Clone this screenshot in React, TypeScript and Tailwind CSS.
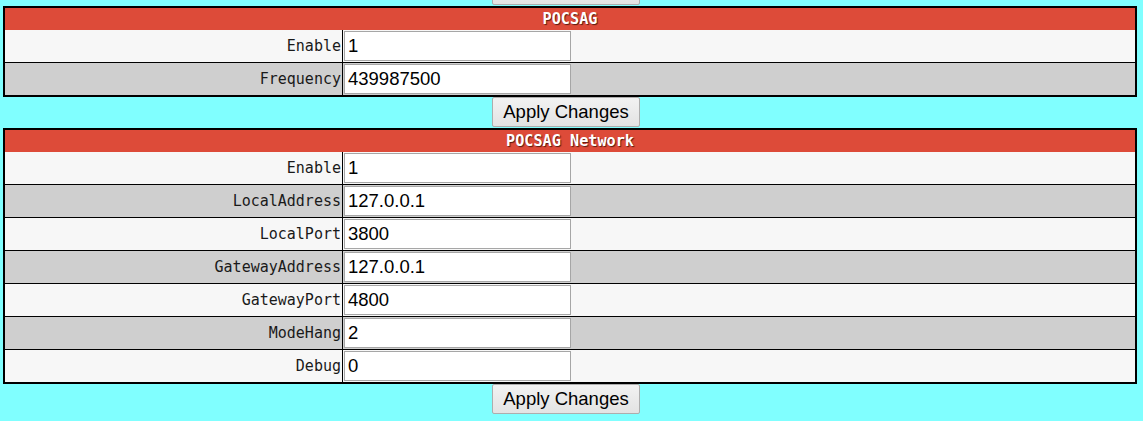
import React from "react";

const mono = { fontFamily: '"DejaVu Sans Mono", "Liberation Mono", monospace' };
const arial = { fontFamily: '"Liberation Sans", Arial, sans-serif' };

function ApplyButton({ className = "" }: { className?: string }) {
  return (
    <div className={`w-[1132px] h-[31px] flex justify-center items-start ${className}`}>
      <button
        style={arial}
        className="h-[30px] w-[148px] border border-[#adadad] bg-gradient-to-b from-[#f2f2f2] to-[#e3e3e3] text-[18.5px] leading-none text-black rounded-[2px]"
      >
        Apply Changes
      </button>
    </div>
  );
}

function Row({ label, value, dark, last }: { label: string; value: string; dark: boolean; last: boolean }) {
  return (
    <div
      className={`flex ${last ? "h-[32px]" : "h-[33px] border-b border-black"} ${dark ? "bg-[#cfcfcf]" : "bg-[#f7f7f7]"}`}
    >
      <div
        style={mono}
        className="w-[338px] border-r border-black flex items-center justify-end pr-[1px] text-[15px] text-[#1a1a1a]"
      >
        {label}
      </div>
      <div className="flex-1 flex items-center pl-[1px]">
        <div
          style={arial}
          className="w-[227px] h-[30px] bg-white border border-[#a6a6a6] flex items-center pl-[3px] text-[18.5px] text-black"
        >
          {value}
        </div>
      </div>
    </div>
  );
}

function Section({ title, rows }: { title: string; rows: [string, string][] }) {
  return (
    <div className="ml-[3px] w-[1134px] border-2 border-black">
      <div
        style={mono}
        className="h-[22px] bg-[#dd4b39] flex items-center justify-center text-white font-bold text-[15.2px] [text-shadow:1px_1px_1px_#5a1a10]"
      >
        {title}
      </div>
      {rows.map(([l, v], i) => (
        <Row key={l} label={l} value={v} dark={i % 2 === 1} last={i === rows.length - 1} />
      ))}
    </div>
  );
}

export default function App() {
  return (
    <div className="w-[1143px] h-[421px] overflow-hidden bg-[#80ffff]">
      <ApplyButton className="-mt-[25px]" />
      <Section
        title="POCSAG"
        rows={[
          ["Enable", "1"],
          ["Frequency", "439987500"],
        ]}
      />
      <ApplyButton />
      <Section
        title="POCSAG Network"
        rows={[
          ["Enable", "1"],
          ["LocalAddress", "127.0.0.1"],
          ["LocalPort", "3800"],
          ["GatewayAddress", "127.0.0.1"],
          ["GatewayPort", "4800"],
          ["ModeHang", "2"],
          ["Debug", "0"],
        ]}
      />
      <ApplyButton />
    </div>
  );
}
